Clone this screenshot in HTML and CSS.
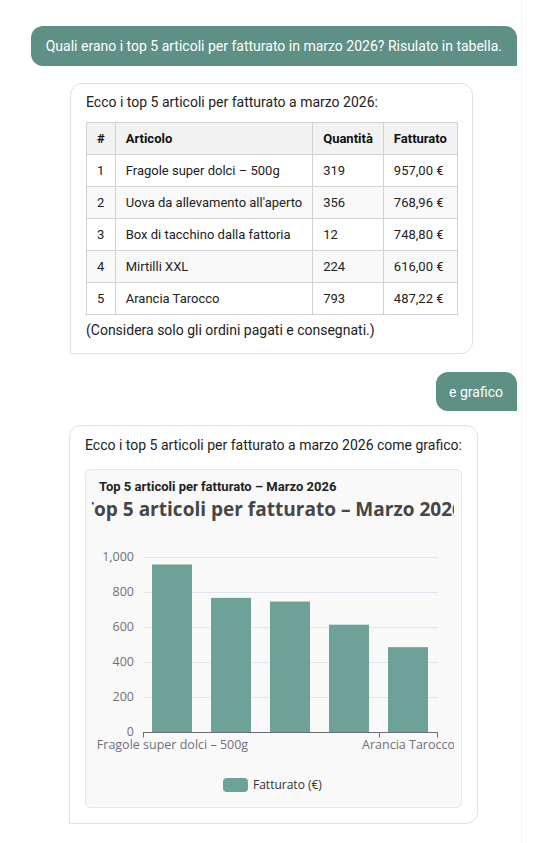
FILE: index.html
```html
<!DOCTYPE html>
<html lang="it">
<head>
    <meta charset="UTF-8">
    <meta name="viewport" content="width=device-width, initial-scale=1.0">
    <title>Chat fatturato</title>
    <link rel="stylesheet" href="styles.css">
</head>
<body>
    <div class="chat">
        <div class="msg user">Quali erano i top 5 articoli per fatturato in marzo 2026? Risulato in tabella.</div>

        <div class="msg bot bot-table">
            <p class="intro">Ecco i top 5 articoli per fatturato a marzo 2026:</p>
            <table class="data">
                <thead>
                    <tr><th>#</th><th>Articolo</th><th>Quantità</th><th>Fatturato</th></tr>
                </thead>
                <tbody>
                    <tr><td>1</td><td>Fragole super dolci – 500g</td><td>319</td><td>957,00 €</td></tr>
                    <tr><td>2</td><td>Uova da allevamento all'aperto</td><td>356</td><td>768,96 €</td></tr>
                    <tr><td>3</td><td>Box di tacchino dalla fattoria</td><td>12</td><td>748,80 €</td></tr>
                    <tr><td>4</td><td>Mirtilli XXL</td><td>224</td><td>616,00 €</td></tr>
                    <tr><td>5</td><td>Arancia Tarocco</td><td>793</td><td>487,22 €</td></tr>
                </tbody>
            </table>
            <p class="note">(Considera solo gli ordini pagati e consegnati.)</p>
        </div>

        <div class="msg user user-short">e grafico</div>

        <div class="msg bot bot-chart">
            <p class="intro">Ecco i top 5 articoli per fatturato a marzo 2026 come grafico:</p>
            <div class="chart-box">
                <div class="chart-heading">Top 5 articoli per fatturato – Marzo 2026</div>
                <svg class="chart" width="362" height="300" viewBox="0 0 362 300">
                    <text class="chart-title" x="181" y="21" text-anchor="middle" textLength="380" lengthAdjust="spacingAndGlyphs">Top 5 articoli per fatturato – Marzo 2026</text>

                    <!-- grid -->
                    <g class="grid">
                        <line x1="51" y1="62.5" x2="346" y2="62.5"/>
                        <line x1="51" y1="97.5" x2="346" y2="97.5"/>
                        <line x1="51" y1="132.5" x2="346" y2="132.5"/>
                        <line x1="51" y1="167.5" x2="346" y2="167.5"/>
                        <line x1="51" y1="202.5" x2="346" y2="202.5"/>
                    </g>

                    <g class="y-labels" text-anchor="end">
                        <text x="42" y="66">1,000</text>
                        <text x="42" y="101">800</text>
                        <text x="42" y="136">600</text>
                        <text x="42" y="171">400</text>
                        <text x="42" y="206">200</text>
                        <text x="42" y="241">0</text>
                    </g>

                    <!-- bars -->
                    <g class="bars">
                        <rect x="60" y="69.5" width="40" height="168"/>
                        <rect x="119" y="102.9" width="40" height="134.6"/>
                        <rect x="178" y="106.5" width="40" height="131"/>
                        <rect x="237" y="129.7" width="40" height="107.8"/>
                        <rect x="296" y="152.2" width="40" height="85.3"/>
                    </g>

                    <g class="axis">
                        <line x1="51" y1="237.5" x2="346" y2="237.5"/>
                        <line x1="51.5" y1="237.5" x2="51.5" y2="242.5"/>
                        <line x1="287.5" y1="237.5" x2="287.5" y2="242.5"/>
                        <line x1="345.5" y1="237.5" x2="345.5" y2="242.5"/>
                    </g>

                    <g class="x-labels" text-anchor="middle">
                        <text x="80.5" y="254">Fragole super dolci – 500g</text>
                        <text x="316.5" y="254">Arancia Tarocco</text>
                    </g>

                    <!-- legend -->
                    <rect class="legend-swatch" x="131" y="283" width="25" height="14" rx="4"/>
                    <text class="legend-text" x="161" y="294">Fatturato (€)</text>
                </svg>
            </div>
        </div>
    </div>
</body>
</html>
```

FILE: styles.css
```css
body {
    margin: 0;
    background: #fff;
    font-family: Roboto, "Liberation Sans", sans-serif;
    color: #222;
}
.chat {
    width: 522px;
    padding: 26px 4px 20px 32px;
    box-sizing: border-box;
    border-right: 1px solid #f4f4f4;
    display: flex;
    flex-direction: column;
    min-height: 843px;
}
.msg {
    font-size: 14px;
    line-height: 20px;
}
.user {
    align-self: flex-end;
    background: #5e9086;
    color: #fff;
    padding: 10px 15px;
    border-radius: 12px 12px 0 12px;
    white-space: nowrap;
}
.user-short {
    margin-top: 18px;
    padding: 10px 14px 9px 13px;
}
.bot {
    align-self: flex-start;
    border: 1px solid #e0e0e0;
    border-radius: 12px 12px 12px 0;
    background: #fff;
}
.bot-table {
    margin: 17px 0 0 38px;
    padding: 8px 14px 13px 15px;
}
.bot-chart {
    margin: 14px 0 0 37px;
    padding: 9px 15px 15px 15px;
}
.intro {
    margin: 0;
}
.bot-table .intro {
    margin-bottom: 10px;
}
.bot-chart .intro {
    margin-bottom: 14px;
}
.note {
    margin: 5px 0 0;
}
table.data {
    border-collapse: collapse;
    font-size: 13px;
    line-height: 19px;
}
table.data th,
table.data td {
    border: 1px solid #d2d2d2;
    padding: 6px 10px;
    text-align: left;
    white-space: nowrap;
}
table.data th {
    background: #f2f2f2;
    font-weight: bold;
    color: #111;
}
table.data tbody tr:nth-child(even) td {
    background: #f9f9f9;
}
.chart-box {
    background: #f9f9f9;
    border: 1px solid #e6e6e6;
    border-radius: 6px;
    padding: 8px 7px 12px 6px;
}
.chart-heading {
    font-size: 13px;
    font-weight: bold;
    line-height: 17px;
    padding-left: 7px;
    color: #222;
}
.chart {
    display: block;
    font-family: "Open Sans", "Noto Sans", sans-serif;
}
.chart-title {
    font-size: 20px;
    font-weight: bold;
    fill: #464646;
}
.grid line {
    stroke: #e0e6f1;
    stroke-width: 1;
}
.y-labels text,
.x-labels text {
    font-size: 12.5px;
    fill: #6e7079;
}
.bars rect {
    fill: #6ea197;
}
.axis line {
    stroke: #6e7079;
    stroke-width: 1;
}
.legend-swatch {
    fill: #6ea197;
}
.legend-text {
    font-size: 12px;
    fill: #333;
}
```
